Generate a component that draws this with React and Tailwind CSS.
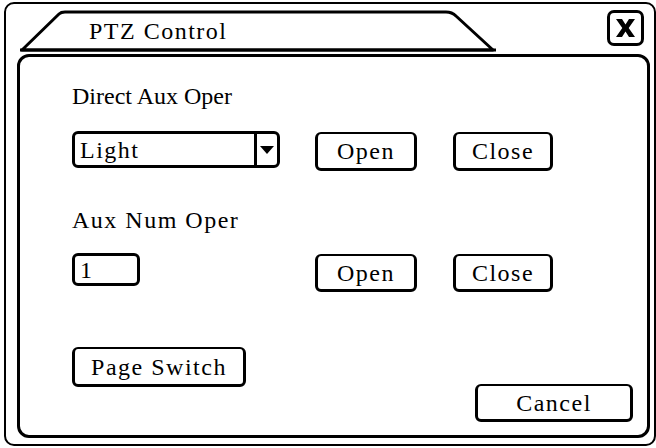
const serif = "font-['Liberation_Serif',serif] text-[24px] leading-[24px] tracking-[1.5px] text-black";

function Btn({ label, className = "" }) {
  return (
    <div
      className={`flex items-center justify-center border-[3px] border-t-[2px] border-black rounded-[6px] bg-white ${serif} ${className}`}
    >
      {label}
    </div>
  );
}

function Tab() {
  return (
    <div className="relative ml-[14px] w-[480px] h-[50px]">
      <svg className="absolute inset-0" width="480" height="50" viewBox="0 0 480 50">
        <path
          d="M 2 46 L 39 10 Q 41 8 45 8 L 426 8 Q 432 8 436 12 L 473 46 Z"
          fill="white"
          stroke="black"
          strokeWidth="3"
          strokeLinejoin="round"
        />
        <line x1="0" y1="46" x2="476" y2="46" stroke="black" strokeWidth="3" />
      </svg>
      <span className={`relative block pl-[69px] pt-[15px] ${serif}`}>PTZ Control</span>
    </div>
  );
}

export default function App() {
  return (
    <div className="w-[656px] h-[448px] bg-white overflow-hidden pt-[2px] pl-[4px]">
      <div className="w-[652px] h-[444px] border-2 border-black rounded-[10px] flex flex-col">
        {/* Title bar */}
        <div className="h-[50px] flex items-start">
          <Tab />
          <div className="ml-auto mr-[10px] mt-[6px] w-[37px] h-[36px] border-[3px] border-black rounded-[7px] flex items-center justify-center">
            <svg width="19" height="18" viewBox="0 0 19 18">
              <path d="M0 0 H6 L9.5 5.5 L13 0 H19 L12.7 9 L19 18 H13 L9.5 12.5 L6 18 H0 L6.3 9 Z" fill="black" />
            </svg>
          </div>
        </div>

        {/* Panel */}
        <div className="flex-1 ml-[11px] mr-[4px] mb-[6px] border-[3px] border-black rounded-[12px] pl-[52px] pr-[14px] flex flex-col">
          <div className={`mt-[27px] ${serif} tracking-normal`}>Direct Aux Oper</div>

          <div className="mt-[23px] flex items-start">
            <div className="w-[208px] h-[37px] border-[3px] border-black rounded-[6px] flex">
              <div className={`flex-1 flex items-center pl-[5px] pt-[1px] ${serif}`}>Light</div>
              <div className="w-[23px] border-l-[3px] border-black flex items-center justify-center">
                <svg width="14" height="8" viewBox="0 0 14 8">
                  <path d="M0 0 L14 0 L7 8 Z" fill="black" />
                </svg>
              </div>
            </div>
            <Btn label="Open" className="ml-[35px] mt-[1px] w-[102px] h-[39px]" />
            <Btn label="Close" className="ml-[36px] mt-[1px] w-[100px] h-[39px]" />
          </div>

          <div className={`mt-[37px] ${serif}`}>Aux Num Oper</div>

          <div className="mt-[21px] flex items-start">
            <div className={`w-[68px] h-[33px] border-[3px] border-black rounded-[6px] flex items-center pl-[5px] ${serif}`}>
              1
            </div>
            <Btn label="Open" className="ml-[175px] mt-[1px] w-[102px] h-[38px]" />
            <Btn label="Close" className="ml-[36px] mt-[1px] w-[100px] h-[38px]" />
          </div>

          <div className="mt-[55px] flex items-start">
            <Btn label="Page Switch" className="w-[174px] h-[40px]" />
            <Btn label="Cancel" className="ml-auto mt-[37px] w-[158px] h-[38px]" />
          </div>
        </div>
      </div>
    </div>
  );
}
